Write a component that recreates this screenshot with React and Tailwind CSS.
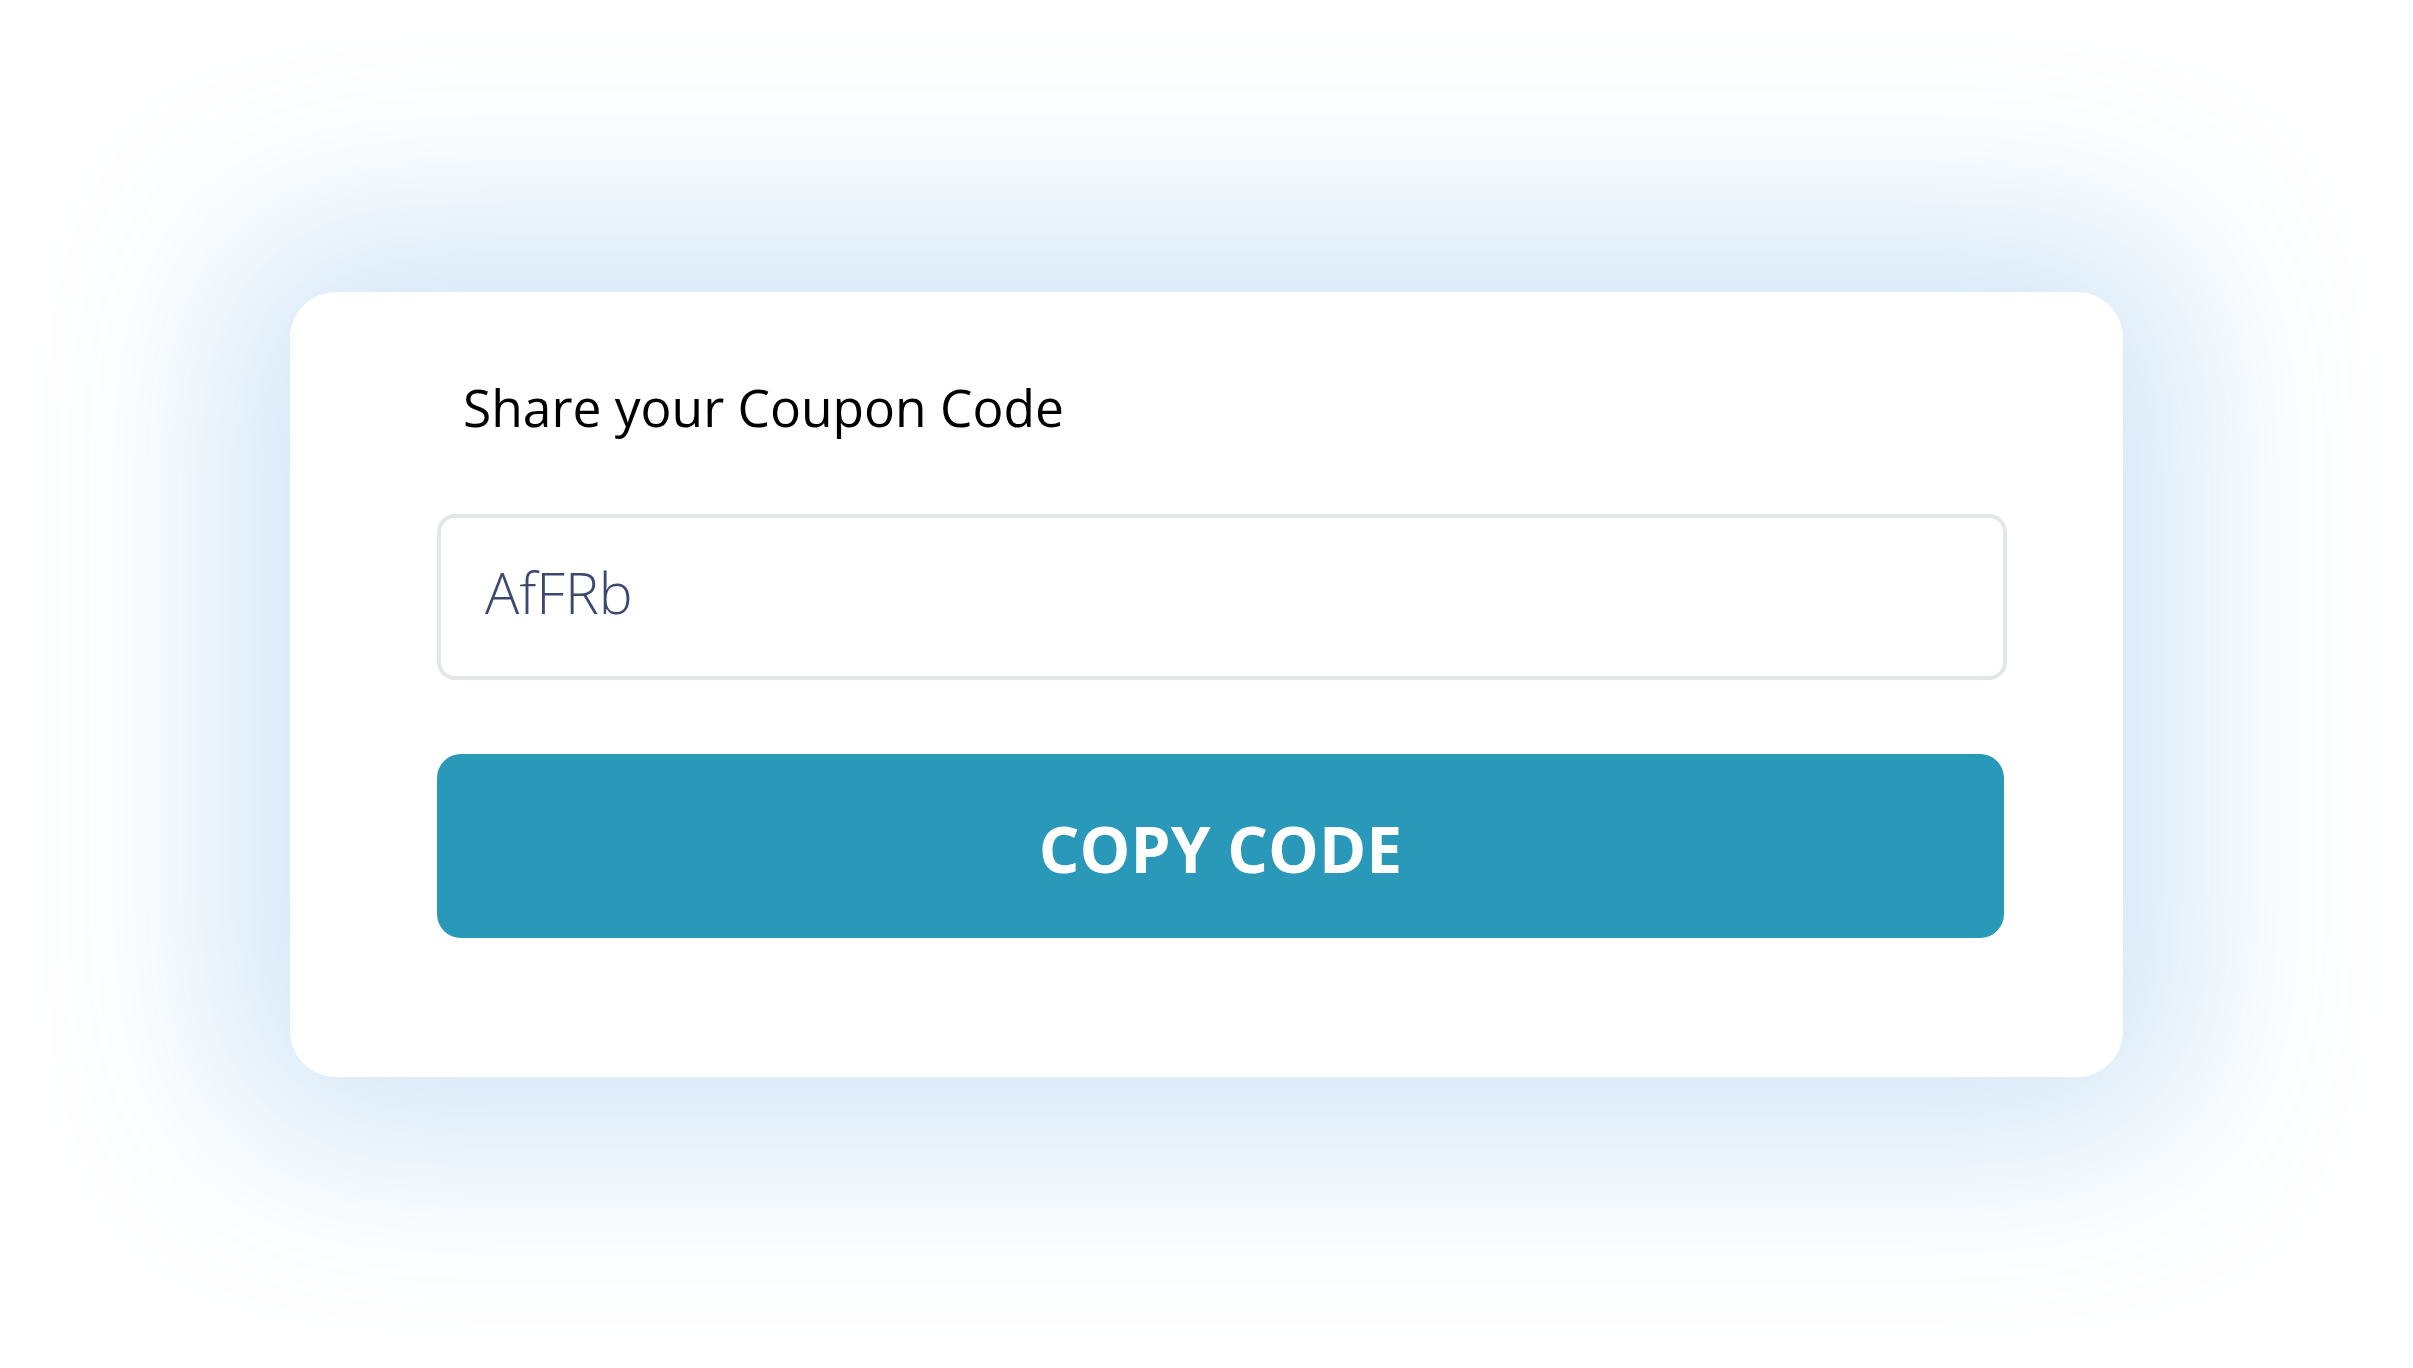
export default function App() {
  return (
    <div className="w-full h-[1368px] bg-white flex items-center justify-center" style={{ fontFamily: '"Open Sans", "Noto Sans", sans-serif' }}>
      <div className="w-[1833px] h-[785px] bg-white rounded-[46px] pl-[147px] pr-[116px] pt-[80px] shadow-[0_0_180px_60px_rgba(200,224,245,0.85)] flex flex-col">
        <h2 className="text-[51.5px] leading-[70px] text-black font-normal pl-[26px]">Share your Coupon Code</h2>
        <div className="mt-[72px] h-[166px] border-4 border-[#e4e7e9] rounded-[18px] flex items-center pl-[44px] pb-[8px]">
          <span className="text-[57px] font-light text-[#3d4870]">AfFRb</span>
        </div>
        <button className="mt-[74px] h-[184px] w-[1567px] rounded-[24px] bg-[#2998b9] text-white text-[64px] font-bold pt-[6px]">
          COPY CODE
        </button>
      </div>
    </div>
  );
}
